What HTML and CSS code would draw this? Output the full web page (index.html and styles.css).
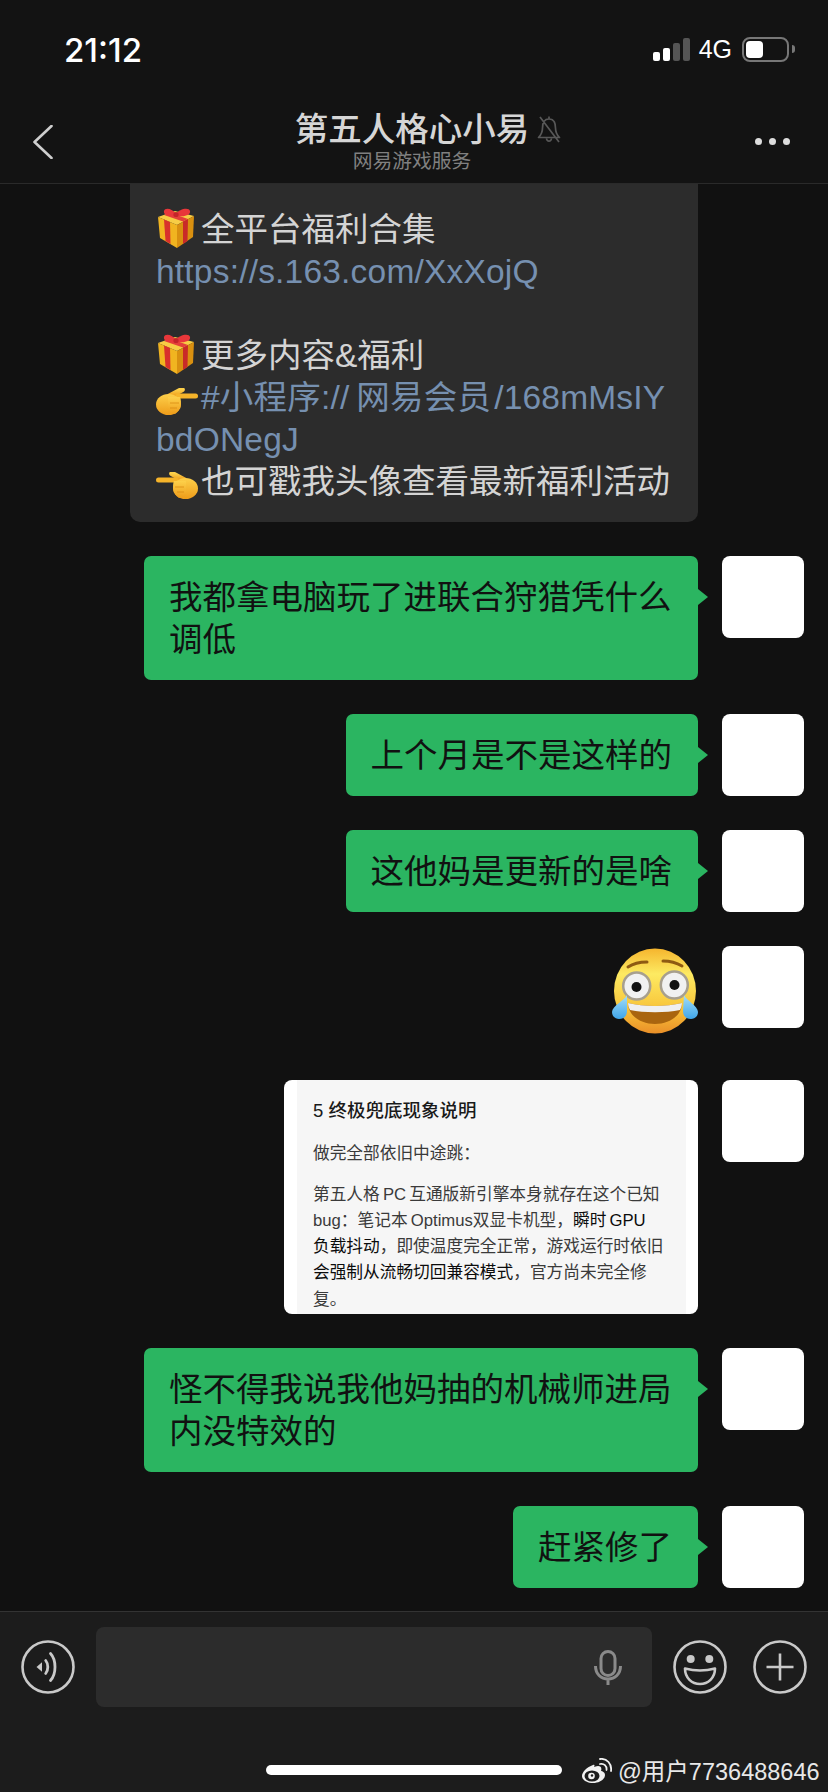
FILE: index.html
```html
<!DOCTYPE html>
<html lang="zh">

<head>
    <meta charset="utf-8">
    <title>第五人格心小易</title>
    <link rel="stylesheet" href="styles.css">
</head>

<body>
    <svg class="defs" width="0" height="0">
        <defs>
            <linearGradient id="faceFill" x1="0" y1="0" x2="0" y2="1">
                <stop offset="0" stop-color="#f5b52e"/>
                <stop offset=".3" stop-color="#fdea62"/>
                <stop offset=".7" stop-color="#f8c53a"/>
                <stop offset="1" stop-color="#ea8f28"/>
            </linearGradient>
            <linearGradient id="handFill" x1="0" y1="0" x2="0" y2="1">
                <stop offset="0" stop-color="#fdd04a"/>
                <stop offset="1" stop-color="#ee9c1a"/>
            </linearGradient>
            <linearGradient id="tearFill" x1="0" y1="0" x2="0" y2="1">
                <stop offset="0" stop-color="#a6def8"/>
                <stop offset="1" stop-color="#3fa6ea"/>
            </linearGradient>
        </defs>
        <symbol id="gift" viewBox="0 0 42 42">
            <path d="M2 9 19 3 38 8 21 17Z" fill="#f7cd45"/>
            <path d="M2 9 21 17V40L4 30Z" fill="#f1b420"/>
            <path d="M21 17 38 8 37 29 21 40Z" fill="#d99010"/>
            <path d="M8 11.5 14 14 14.5 36 9.500 33Z" fill="#d8302c"/>
            <path d="M27 13.500 32 11 31.500 33 27 36Z" fill="#c92a28"/>
            <path d="M8 7 14 4.800 32 11 27 13.500Z" fill="#e4403a"/>
            <path d="M20 8C15 9 7 8 8 3 9-1 17 1 20 6 23 1 33-1 34 3 35 8 25 9 20 8Z" fill="#e8373a"/>
            <circle cx="20" cy="6.500" r="2.600" fill="#c4242a"/>
        </symbol>
        <symbol id="hand" viewBox="0 0 42 28">
            <path d="M14 8 26 1.500" stroke="url(#handFill)" stroke-width="5.500" stroke-linecap="round"/>
            <path d="M22 8H39.500" stroke="#f6b42a" stroke-width="5" stroke-linecap="round"/>
            <ellipse cx="12.500" cy="16.500" rx="12.500" ry="10.500" fill="url(#handFill)"/>
            <path d="M12 9H24C26 14 25 22 19 26L12 24Z" fill="url(#handFill)"/>
            <path d="M14 15H23M14 20H21" stroke="#d98a12" stroke-width=".8" fill="none"/>
        </symbol>
    </svg>

    <div class="phone">
        <header class="top">
            <div class="status">
                <span class="time">21:12</span>
                <div class="status-right">
                    <div class="signal">
                        <i class="bar b1"></i>
                        <i class="bar b2"></i>
                        <i class="bar b3"></i>
                        <i class="bar b4"></i>
                    </div>
                    <span class="net">4G</span>
                    <div class="battery"><i class="level"></i></div>
                    <i class="nub"></i>
                </div>
            </div>
            <nav class="nav">
                <svg class="back" width="20" height="34" viewBox="0 0 20 34">
                    <path d="M18.500 1 1.500 17 18.500 33" fill="none" stroke="#cfcfcf" stroke-width="2.600" stroke-linecap="round" stroke-linejoin="round"/>
                </svg>
                <div class="who">
                    <div class="name">第五人格心小易
                        <svg class="muted" width="26" height="30" viewBox="0 0 26 30">
                            <path d="M13 2.500V5M13 5C7.500 5 6.500 10 6.500 14 6.500 19 5 21 2.500 23.500H23.500C21 21 19.500 19 19.500 14 19.500 10 18.500 5 13 5ZM10.500 24.500C11 28 15 28 15.500 24.500M4 3 23 28" fill="none" stroke="#585858" stroke-width="1.700" stroke-linejoin="round"/>
                        </svg>
                    </div>
                    <div class="sub">网易游戏服务</div>
                </div>
                <div class="more"><i></i><i></i><i></i></div>
            </nav>
        </header>

        <main class="chat">
            <div class="notice">
                <svg class="em gift"><use href="#gift"/></svg>全平台福利合集<br>
                <span class="link">https://s.163.com/XxXojQ</span><br>
                <br>
                <svg class="em gift"><use href="#gift"/></svg>更多内容&amp;福利<br>
                <svg class="em hand"><use href="#hand"/></svg><span class="link">#小程序://&#8201;网易会员&#8202;/168mMsIY<br>bdONegJ</span><br>
                <svg class="em hand flip"><use href="#hand"/></svg>也可戳我头像查看最新福利活动
            </div>

            <div class="row">
                <div class="bubble wide">我都拿电脑玩了进联合狩猎凭什么<br>调低</div>
                <div class="avatar"></div>
            </div>
            <div class="row">
                <div class="bubble">上个月是不是这样的</div>
                <div class="avatar"></div>
            </div>
            <div class="row">
                <div class="bubble">这他妈是更新的是啥</div>
                <div class="avatar"></div>
            </div>
            <div class="row">
                <svg class="sticker" width="86" height="88" viewBox="0 0 86 88">
                    <ellipse cx="43" cy="44" rx="41" ry="42.500" fill="url(#faceFill)"/>
                    <path d="M16 20C22 16 29 15 35 15M51 14C57 14 65 16 70 19" fill="none" stroke="#8f5a12" stroke-width="3" stroke-linecap="round"/>
                    <circle cx="24.700" cy="39" r="13.500" fill="#f1f1f1" stroke="#a79f8e" stroke-width="2.500"/>
                    <circle cx="62.300" cy="38" r="13.500" fill="#f1f1f1" stroke="#a79f8e" stroke-width="2.500"/>
                    <circle cx="24.500" cy="40" r="5" fill="#111"/>
                    <circle cx="62.500" cy="38" r="5" fill="#111"/>
                    <path d="M16 56C32 60 54 60 70 56 70 68 58 77 43 77 28 77 16 68 16 56Z" fill="#a9650f"/>
                    <path d="M16 56C32 60 54 60 70 56 70 59 69 61 68 63 54 66 32 66 18 63 17 61 16 59 16 56Z" fill="#efefef"/>
                    <path d="M15 48C13 53 0 59 0 65 0 70 4 72 7 72 12 72 15 69 15 64Z" fill="url(#tearFill)"/>
                    <path d="M72 48C74 53 86 59 86 65 86 70 82 72 79 72 74 72 71 69 71 64Z" fill="url(#tearFill)"/>
                </svg>
                <div class="avatar"></div>
            </div>
            <div class="row shot-row">
                <div class="shot">
                    <div class="page">
                        <p class="head">5 终极兜底现象说明</p>
                        <p>做完全部依旧中途跳：</p>
                        <p>第五人格 PC 互通版新引擎本身就存在这个已知<br>
                            bug：笔记本 Optimus双显卡机型，<b>瞬时 GPU</b><br>
                            <b>负载抖动</b>，即使温度完全正常，游戏运行时依旧<br>
                            <b>会强制从流畅切回兼容模式</b>，官方尚未完全修<br>
                            复。</p>
                    </div>
                </div>
                <div class="avatar"></div>
            </div>
            <div class="row">
                <div class="bubble wide">怪不得我说我他妈抽的机械师进局<br>内没特效的</div>
                <div class="avatar"></div>
            </div>
            <div class="row">
                <div class="bubble">赶紧修了</div>
                <div class="avatar"></div>
            </div>
        </main>

        <footer class="bar-bottom">
            <div class="tools">
                <svg class="tool" width="54" height="54" viewBox="0 0 54 54">
                    <circle cx="27" cy="27" r="25.500" fill="none" stroke="#c9c9c9" stroke-width="2.600"/>
                    <path d="M15.500 27 21 22.300V31.700Z" fill="#c9c9c9"/>
                    <path d="M24.700 20.500C27.500 24 27.500 30 24.700 33.500M29.500 13.500C35.500 20 35.500 34 29.500 40.500" fill="none" stroke="#c9c9c9" stroke-width="2.800" stroke-linecap="round"/>
                </svg>
                <div class="input">
                    <svg width="28" height="35" viewBox="0 0 28 35">
                        <rect x="7" y="1.500" width="14" height="24" rx="7" fill="none" stroke="#8a8a8a" stroke-width="3"/>
                        <path d="M1.500 16C1.500 24 7 29 14 29 21 29 26.500 24 26.500 16M14 29V35" fill="none" stroke="#8a8a8a" stroke-width="3"/>
                    </svg>
                </div>
                <svg class="tool" width="54" height="54" viewBox="0 0 54 54">
                    <circle cx="27" cy="27" r="25.500" fill="none" stroke="#c9c9c9" stroke-width="2.600"/>
                    <circle cx="17.700" cy="19" r="4" fill="#c9c9c9"/>
                    <circle cx="36.300" cy="19" r="4" fill="#c9c9c9"/>
                    <path d="M12 28.500Q27 32.500 42 28.500C42 38 35 44 27 44 19 44 12 38 12 28.500Z" fill="none" stroke="#c9c9c9" stroke-width="2.600" stroke-linejoin="round"/>
                </svg>
                <svg class="tool plus" width="54" height="54" viewBox="0 0 54 54">
                    <circle cx="27" cy="27" r="25.500" fill="none" stroke="#c9c9c9" stroke-width="2.600"/>
                    <path d="M13.500 27H40.500M27 13.500V40.500" stroke="#c9c9c9" stroke-width="2.600"/>
                </svg>
            </div>
            <div class="bottom-line">
                <div class="home"></div>
                <svg class="weibo" width="31" height="25" viewBox="0 0 31 25">
                    <path d="M12 7C6 9 1 14 1 18 1 22 6 25 12 25 19 25 24 21 24 17 24 14 21 13 20 13 21 10 20 8 17 8 15 8 14 9 13 9 14 7 13.500 6.500 12 7Z" fill="#f2f2f2"/>
                    <ellipse cx="11" cy="18" rx="7.500" ry="5.500" fill="#1c1c1c"/>
                    <circle cx="10.500" cy="18" r="3.300" fill="#f2f2f2"/>
                    <circle cx="11" cy="17.500" r="1.200" fill="#1c1c1c"/>
                    <path d="M19 6C23 5 26 8 25.500 12M19 1C26 0 31 6 30 13" fill="none" stroke="#f2f2f2" stroke-width="1.800" stroke-linecap="round"/>
                </svg>
                <span class="mark">@用户7736488646</span>
            </div>
        </footer>
    </div>
</body>

</html>
```

FILE: styles.css
```css
* {
    box-sizing: border-box;
}

body {
    margin: 0;
    background-color: #111;
    font-family: "Liberation Sans", "Noto Sans CJK SC", sans-serif;
}

.defs {
    position: absolute;
}

.phone {
    width: 828px;
    height: 1792px;
    display: flex;
    flex-direction: column;
    overflow: hidden;
}

/* top */
.top {
    height: 184px;
    background-color: #131313;
    border-bottom: 1px solid #2a2a2a;
}

.status {
    height: 100px;
    display: flex;
    justify-content: space-between;
    padding: 30px 33px 0 64px;
}

.time {
    font-family: Inter, "Liberation Sans", sans-serif;
    font-size: 33px;
    font-weight: 500;
    line-height: 40px;
    color: #fff;
}

.status-right {
    display: flex;
    align-items: flex-start;
}

.signal {
    display: flex;
    align-items: flex-end;
    gap: 3px;
    height: 23px;
    margin-top: 8px;
}

.bar {
    width: 7px;
    border-radius: 2px;
    background-color: #fff;
}

.b1 { height: 9px; }
.b2 { height: 13px; }
.b3 { height: 18px; background-color: #555; }
.b4 { height: 23px; background-color: #555; }

.net {
    margin: 7px 0 0 9px;
    font-size: 25px;
    line-height: 24px;
    color: #fff;
}

.battery {
    width: 47px;
    height: 25px;
    margin: 7px 0 0 10px;
    padding: 2px;
    border: 2px solid #777;
    border-radius: 8px;
}

.level {
    display: block;
    width: 17px;
    height: 17px;
    border-radius: 4px;
    background-color: #fff;
}

.nub {
    width: 3px;
    height: 8px;
    margin: 15px 0 0 3px;
    border-radius: 0 3px 3px 0;
    background-color: #777;
}

.nav {
    height: 83px;
    display: grid;
    grid-template-columns: 1fr auto 1fr;
    align-items: center;
}

.back {
    margin-left: 33px;
}

.who {
    text-align: center;
    margin-right: 4px;
}

.name {
    position: relative;
    font-size: 33.500px;
    line-height: 38px;
    font-weight: 500;
    color: #d6d6d6;
}

.muted {
    position: absolute;
    left: 241px;
    top: 3px;
}

.sub {
    font-size: 19.800px;
    line-height: 24px;
    color: #808080;
}

.more {
    display: flex;
    justify-content: flex-end;
    gap: 7px;
    padding-right: 38px;
}

.more i {
    width: 7px;
    height: 7px;
    border-radius: 50%;
    background-color: #ddd;
}

/* messages */
.chat {
    flex: 1;
    overflow: hidden;
}

.notice {
    width: 568px;
    margin-left: 130px;
    padding: 25px 0 19px 26px;
    background-color: #2c2c2c;
    border-radius: 0 0 10px 10px;
    font-size: 33.500px;
    line-height: 42px;
    color: #d4d4d4;
    white-space: nowrap;
}

.link {
    color: #7690b0;
    letter-spacing: .2px;
}

.em {
    display: inline-block;
    width: 42px;
    margin: -12px 3px -12px 0;
}

.gift {
    height: 42px;
    vertical-align: 3px;
}

.hand {
    height: 28px;
    vertical-align: 5px;
}

.flip {
    transform: scaleX(-1);
}

.row {
    display: flex;
    justify-content: flex-end;
    align-items: flex-start;
    gap: 24px;
    margin-top: 34px;
    padding-right: 24px;
}

.shot-row {
    margin-top: 52px;
}

.bubble {
    position: relative;
    padding: 21px 26px 19px 25px;
    background-color: #2bb561;
    border-radius: 7px;
    font-size: 33.500px;
    line-height: 42px;
    color: #111;
    white-space: nowrap;
}

.bubble::after {
    content: "";
    position: absolute;
    left: 100%;
    top: 33px;
    border: 8px solid transparent;
    border-left: 10px solid #2bb561;
    border-right: 0;
}

.wide {
    width: 554px;
}

.avatar {
    width: 82px;
    height: 82px;
    background-color: #fff;
    border-radius: 8px;
}

.sticker {
    margin: 1px 0 -7px;
}

.shot {
    width: 414px;
    height: 234px;
    padding: 0 12px 0 13px;
    background-color: #fff;
    border-radius: 8px;
    overflow: hidden;
}

.page {
    height: 100%;
    padding-top: 18px;
    padding-left: 16px;
    background-color: #f6f6f6;
    font-size: 16.700px;
    line-height: 26.100px;
    word-spacing: -1.500px;
    color: #3a3a3a;
    white-space: nowrap;
}

.page p {
    margin: 0 0 15px;
}

.page .head {
    margin-bottom: 17px;
    font-size: 18.500px;
    font-weight: 500;
    word-spacing: 0;
    color: #1a1a1a;
}

.page b {
    font-weight: 400;
    color: #0c0c0c;
}

/* input bar */
.bar-bottom {
    height: 181px;
    background-color: #1c1c1c;
    border-top: 1px solid #333;
    padding-top: 15px;
}

.tools {
    display: flex;
    align-items: center;
    padding-left: 21px;
    gap: 21px;
}

.plus {
    margin-left: 5px;
}

.input {
    width: 556px;
    height: 80px;
    display: flex;
    align-items: center;
    justify-content: flex-end;
    padding-right: 30px;
    background-color: #2c2c2c;
    border-radius: 8px;
}

.bottom-line {
    display: flex;
    align-items: center;
    height: 26px;
    margin-top: 50px;
    padding-left: 266px;
}

.home {
    width: 296px;
    height: 10px;
    border-radius: 5px;
    background-color: #fff;
}

.weibo {
    margin: 0 6px 0 19px;
}

.mark {
    font-size: 23.500px;
    color: #e8e8e8;
    white-space: nowrap;
}
```
